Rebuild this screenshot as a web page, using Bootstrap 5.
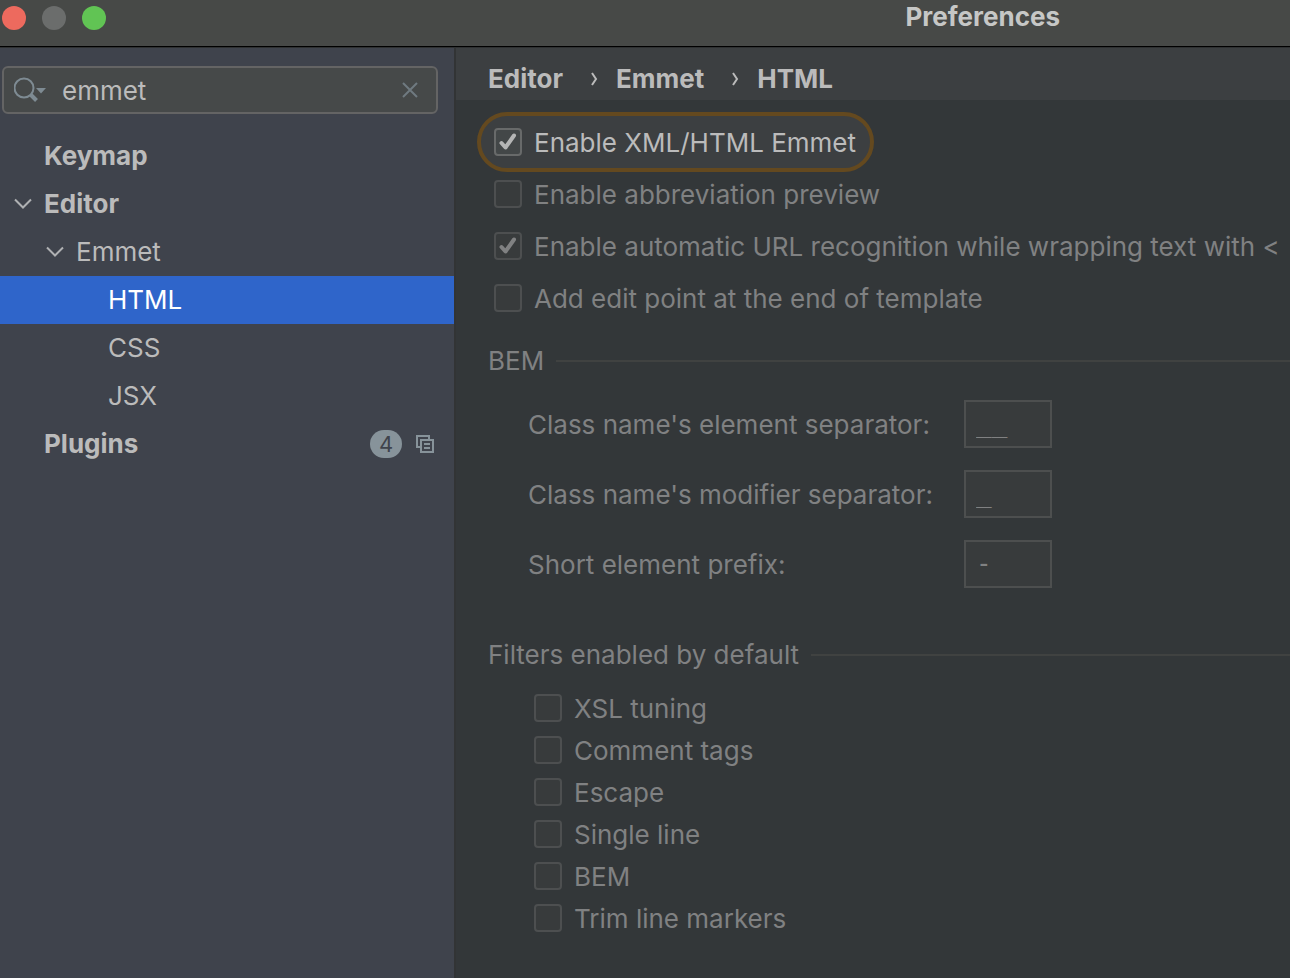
<!DOCTYPE html>
<html lang="en">
<head>
<meta charset="utf-8">
<meta name="viewport" content="width=device-width, initial-scale=1">
<title>Preferences</title>
<link rel="stylesheet" href="https://cdn.jsdelivr.net/npm/bootstrap@5.3.0/dist/css/bootstrap.min.css">
<style>
  body { font: 26px/32px Inter, "Liberation Sans", sans-serif; color: #bbb; background: #333739; }
  .titlebar { height: 46px; padding: 0 230px 0 2px; background: #474947; color: #c6c7c6; box-shadow: 0 1px #000, 0 2px #2f3132; }
  .titlebar h1 { font-size: 26px; line-height: 34px; }
  .lights { gap: 16px; padding-top: 6px; }
  .light { width: 24px; height: 24px; border-radius: 50%; background: #6b6d6c; padding: 0; border: 0; }
  .light-close { background: #ed6a5e; }
  .light-zoom { background: #61c454; }
  .workspace { padding-top: 2px; }
  .sidebar { width: 456px; background: #3f434c; border-right: 2px solid #323435; padding-top: 18px; }
  .search { height: 48px; margin: 0 16px 18px 2px; padding: 0 17px 0 10px; background: #464949; border: 2px solid #646464; border-radius: 6px; }
  .search input { background: none; border: 0; outline: 0; color: #bbb; padding: 2px 0 0; margin-left: 14px; min-width: 0; }
  .bare { background: none; border: 0; padding: 0; line-height: 0; }
  .tree a { height: 48px; color: #bbb; text-decoration: none; padding-right: 20px; }
  .tree svg { margin-right: 12px; }
  .lvl-1 { padding-left: 44px; font-weight: 700; }
  .lvl-1.open { padding-left: 14px; }
  .lvl-2.open { padding-left: 46px; }
  .lvl-3 { padding-left: 108px; }
  .tree a.selected { background: #2f65ca; color: #fff; }
  .count { width: 32px; height: 28px; border-radius: 14px; background: #87939a; color: #3f434c; font: 22px/28px Inter, sans-serif; }
  .tree .copy { margin: 0 0 0 14px; }
  .crumbs { height: 52px; padding: 10px 0 0 32px; background: #3c3f41; font-weight: 700; margin: 0; }
  .crumbs a { color: #bbb; text-decoration: none; }
  .crumbs svg { margin: 0 18px 0 28px; }
  .panel { color: #808182; padding: 12px 0 36px 32px; }
  .opts { gap: 8px; padding-left: 6px; }
  .opt { display: flex; align-items: center; gap: 12px; white-space: nowrap; }
  .opt span, .fields label { padding-top: 2px; }
  .opts .opt { height: 44px; }
  .opts .ring { height: 60px; align-self: flex-start; margin: 0 0 -8px -17px; padding: 0 14px 0 13px; border: 4px solid #64491f; border-radius: 30px; background: #3c3f41; color: #bbb; }
  .tick { appearance: none; flex: none; width: 28px; height: 28px; margin: 0; border: 2px solid #4d4f50; border-radius: 4px; background: #383b3c center/24px 24px no-repeat; }
  .tick:checked { background-image: url("data:image/svg+xml,%3Csvg xmlns='http://www.w3.org/2000/svg' viewBox='0 0 24 24'%3E%3Cpath d='M5.500 13L9.500 17.500L18 5.500' fill='none' stroke='%23808182' stroke-width='4' stroke-linecap='round' stroke-linejoin='round'/%3E%3C/svg%3E"); }
  .ring .tick { border-color: #686a6a; background-color: #434748; }
  .ring .tick:checked { background-image: url("data:image/svg+xml,%3Csvg xmlns='http://www.w3.org/2000/svg' viewBox='0 0 24 24'%3E%3Cpath d='M5.500 13L9.500 17.500L18 5.500' fill='none' stroke='%23b4b5b5' stroke-width='4' stroke-linecap='round' stroke-linejoin='round'/%3E%3C/svg%3E"); }
  .group-head { font-size: 26px; line-height: 32px; font-weight: 400; margin: 0; gap: 12px; }
  .group-head::after { content: ""; flex: 1; height: 2px; background: #404241; }
  .bem { margin-top: 25px; }
  .fields { display: grid; grid-template-columns: 436px 88px; row-gap: 22px; padding: 23px 0 0 40px; align-items: center; }
  .fields input { height: 48px; width: 88px; border: 2px solid #4d4f4f; background: #383b3c; color: #808182; padding: 0 10px 2px; font: 26px/32px "DejaVu Sans Mono", monospace; }
  .filters { margin-top: 51px; }
  .filter-list { gap: 8px; padding: 20px 0 0 46px; }
</style>
</head>
<body class="d-flex flex-column min-vh-100">
<header class="titlebar d-flex justify-content-between align-items-start">
  <div class="lights d-flex">
    <button class="light light-close" aria-label="Close"></button>
    <button class="light" aria-label="Minimize"></button>
    <button class="light light-zoom" aria-label="Zoom"></button>
  </div>
  <h1 class="fw-bold m-0">Preferences</h1>
</header>
<div class="workspace d-flex flex-grow-1">
  <aside class="sidebar flex-shrink-0">
    <div class="search d-flex align-items-center">
      <button class="bare" aria-label="Search history"><svg width="34" height="26" viewBox="0 0 34 26" fill="none" stroke="#7e8b93" stroke-width="2"><circle cx="10" cy="11" r="9.500"/><path d="M16.500 17.500L22.500 23.500" stroke-width="4"/><path d="M22 11h10l-5 5.500z" fill="#7e8b93" stroke="none"/></svg></button>
      <input class="flex-grow-1" type="text" value="emmet" aria-label="Search settings">
      <button class="bare" aria-label="Clear"><svg width="18" height="18" viewBox="0 0 18 18" stroke="#6f7a80" stroke-width="2"><path d="M2 2l14 14M16 2l-14 14"/></svg></button>
    </div>
    <nav class="tree" aria-label="Settings">
      <a href="#" class="lvl-1 d-flex align-items-center">Keymap</a>
      <a href="#" class="lvl-1 open d-flex align-items-center"><svg width="18" height="12" viewBox="0 0 18 12" fill="none" stroke="#afb1b3" stroke-width="2"><path d="M1 1.500l8 8 8-8"/></svg>Editor</a>
      <a href="#" class="lvl-2 open d-flex align-items-center"><svg width="18" height="12" viewBox="0 0 18 12" fill="none" stroke="#afb1b3" stroke-width="2"><path d="M1 1.500l8 8 8-8"/></svg>Emmet</a>
      <a href="#" class="lvl-3 selected d-flex align-items-center" aria-current="page">HTML</a>
      <a href="#" class="lvl-3 d-flex align-items-center">CSS</a>
      <a href="#" class="lvl-3 d-flex align-items-center">JSX</a>
      <a href="#" class="lvl-1 d-flex align-items-center">Plugins<span class="count ms-auto text-center">4</span><svg class="copy" width="18" height="18" viewBox="0 0 18 18" fill="none" stroke="#87939a" stroke-width="2"><path d="M4 12H1V1h12v3M5 5h12v12H5zM8 9h6M8 13h6"/></svg></a>
    </nav>
  </aside>
  <main class="flex-grow-1 overflow-hidden">
    <nav class="crumbs d-flex align-items-center" aria-label="Breadcrumb">
      <a href="#">Editor</a>
      <svg width="7" height="14" viewBox="0 0 7 14" fill="none" stroke="#bbb" stroke-width="2"><path d="M1 1l4 6-4 6"/></svg>
      <a href="#">Emmet</a>
      <svg width="7" height="14" viewBox="0 0 7 14" fill="none" stroke="#bbb" stroke-width="2"><path d="M1 1l4 6-4 6"/></svg>
      <a href="#">HTML</a>
    </nav>
    <form class="panel">
      <div class="opts d-flex flex-column">
        <label class="opt ring"><input class="tick" type="checkbox" checked><span>Enable XML/HTML Emmet</span></label>
        <label class="opt"><input class="tick" type="checkbox" disabled><span>Enable abbreviation preview</span></label>
        <label class="opt"><input class="tick" type="checkbox" checked disabled><span>Enable automatic URL recognition while wrapping text with &lt;</span></label>
        <label class="opt"><input class="tick" type="checkbox" disabled><span>Add edit point at the end of template</span></label>
      </div>
      <section class="bem">
        <h2 class="group-head d-flex align-items-center">BEM</h2>
        <div class="fields">
          <label for="el">Class name's element separator:</label><input id="el" type="text" value="__" disabled>
          <label for="mod">Class name's modifier separator:</label><input id="mod" type="text" value="_" disabled>
          <label for="pre">Short element prefix:</label><input id="pre" type="text" value="-" disabled>
        </div>
      </section>
      <section class="filters">
        <h2 class="group-head d-flex align-items-center">Filters enabled by default</h2>
        <div class="filter-list d-flex flex-column">
          <label class="opt"><input class="tick" type="checkbox" disabled><span>XSL tuning</span></label>
          <label class="opt"><input class="tick" type="checkbox" disabled><span>Comment tags</span></label>
          <label class="opt"><input class="tick" type="checkbox" disabled><span>Escape</span></label>
          <label class="opt"><input class="tick" type="checkbox" disabled><span>Single line</span></label>
          <label class="opt"><input class="tick" type="checkbox" disabled><span>BEM</span></label>
          <label class="opt"><input class="tick" type="checkbox" disabled><span>Trim line markers</span></label>
        </div>
      </section>
    </form>
  </main>
</div>
<script src="https://cdn.jsdelivr.net/npm/bootstrap@5.3.0/dist/js/bootstrap.bundle.min.js"></script>
</body>
</html>
